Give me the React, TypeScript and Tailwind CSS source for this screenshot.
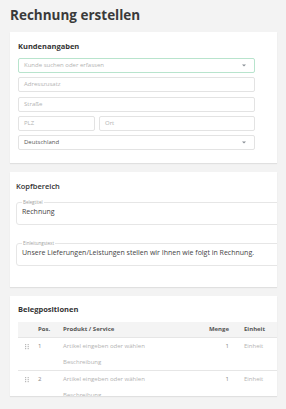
import * as React from "react";

const font = { fontFamily: '"Open Sans", "Noto Sans", sans-serif' };

const inputCls =
  "flex h-[15px] items-center rounded-[2px] border bg-white px-[5px] text-[6px]";
const plain = `${inputCls} border-[#e3e3e3] text-[#b3b3b3]`;

function Caret() {
  return (
    <svg width="4" height="3" viewBox="0 0 4 3" className="ml-auto mr-[3px]">
      <path d="M0 0.5h4L2 2.5z" fill="#8a8f96" />
    </svg>
  );
}

function Grip() {
  return (
    <svg width="4" height="6" viewBox="0 0 4 6">
      {[0, 2, 4].map((y) => (
        <React.Fragment key={y}>
          <rect x="0" y={y} width="1.2" height="1.2" fill="#b8b8b8" />
          <rect x="2.6" y={y} width="1.2" height="1.2" fill="#b8b8b8" />
        </React.Fragment>
      ))}
    </svg>
  );
}

function Card({ children, className = "" }: { children: React.ReactNode; className?: string }) {
  return (
    <div className={`overflow-hidden bg-white shadow-[0_1px_1px_rgba(0,0,0,0.08)] ${className}`}>
      {children}
    </div>
  );
}

function Field({ label, value }: { label: string; value: string }) {
  return (
    <fieldset className="h-[25px] w-[300px] rounded-[3px] border border-[#e6e6e6] pl-[5px]">
      <legend className="px-[1px] text-[4.5px] leading-[4px] text-[#a0a0a0]">{label}</legend>
      <div className="mt-[3px] text-[7px] leading-[10px] text-[#444]">{value}</div>
    </fieldset>
  );
}

function Row({ pos }: { pos: string }) {
  return (
    <div className="flex h-[33px] border-t border-[#e6e6e6] text-[6px] text-[#b3b3b3]">
      <div className="flex w-[20px] pl-[7px] pt-[6px]">
        <Grip />
      </div>
      <div className="w-[25px] pt-[4px] text-[#888]">{pos}</div>
      <div className="w-[135px] pt-[4px] leading-[8px]">
        <div>Artikel eingeben oder wählen</div>
        <div className="mt-[8px]">Beschreibung</div>
      </div>
      <div className="w-[33px] pt-[4px] pr-[2px] text-right leading-[8px] text-[#888]">1</div>
      <div className="pl-[13px] pt-[4px] leading-[8px]">Einheit</div>
    </div>
  );
}

export default function App() {
  return (
    <div className="h-[409px] w-[286px] overflow-hidden bg-[#f3f3f3] pl-[10px] pr-[9px]" style={font}>
      <h1 className="flex h-[32px] items-center pb-[1px] text-[13.5px] font-bold text-[#3a3a3a]">
        Rechnung erstellen
      </h1>

      <Card className="h-[131px] px-[8px] pt-[8px]">
        <h2 className="h-[18px] text-[7.5px] font-bold leading-[12px] text-[#333]">Kundenangaben</h2>
        <div className="flex w-[237px] flex-col gap-[4.25px]">
          <div className={`${inputCls} border-[#b8e4cd] text-[#b3b3b3]`}>
            Kunde suchen oder erfassen
            <Caret />
          </div>
          <div className={plain}>Adresszusatz</div>
          <div className={plain}>Straße</div>
          <div className="flex gap-[4px]">
            <div className={`${plain} w-[77px]`}>PLZ</div>
            <div className={`${plain} flex-1`}>Ort</div>
          </div>
          <div className={`${inputCls} border-[#e3e3e3] text-[#555]`}>
            Deutschland
            <Caret />
          </div>
        </div>
      </Card>

      <Card className="mt-[9px] h-[115px] pl-[6px] pt-[8px]">
        <h2 className="h-[20px] text-[7.5px] font-semibold leading-[12px] text-[#333]">Kopfbereich</h2>
        <div className="flex flex-col gap-[16px]">
          <Field label="Belegtitel" value="Rechnung" />
          <Field
            label="Einleitungstext"
            value="Unsere Lieferungen/Leistungen stellen wir Ihnen wie folgt in Rechnung."
          />
        </div>
      </Card>

      <Card className="mt-[9px] h-[100px] pl-[8px] pt-[7px]">
        <h2 className="h-[19px] text-[7.5px] font-bold leading-[12px] text-[#333]">Belegpositionen</h2>
        <div className="flex h-[15px] items-center bg-[#f4f4f4] text-[6px] font-bold text-[#555]">
          <div className="w-[20px]" />
          <div className="w-[25px]">Pos.</div>
          <div className="w-[135px]">Produkt / Service</div>
          <div className="w-[33px] pr-[2px] text-right">Menge</div>
          <div className="pl-[13px]">Einheit</div>
        </div>
        <Row pos="1" />
        <Row pos="2" />
      </Card>
    </div>
  );
}
